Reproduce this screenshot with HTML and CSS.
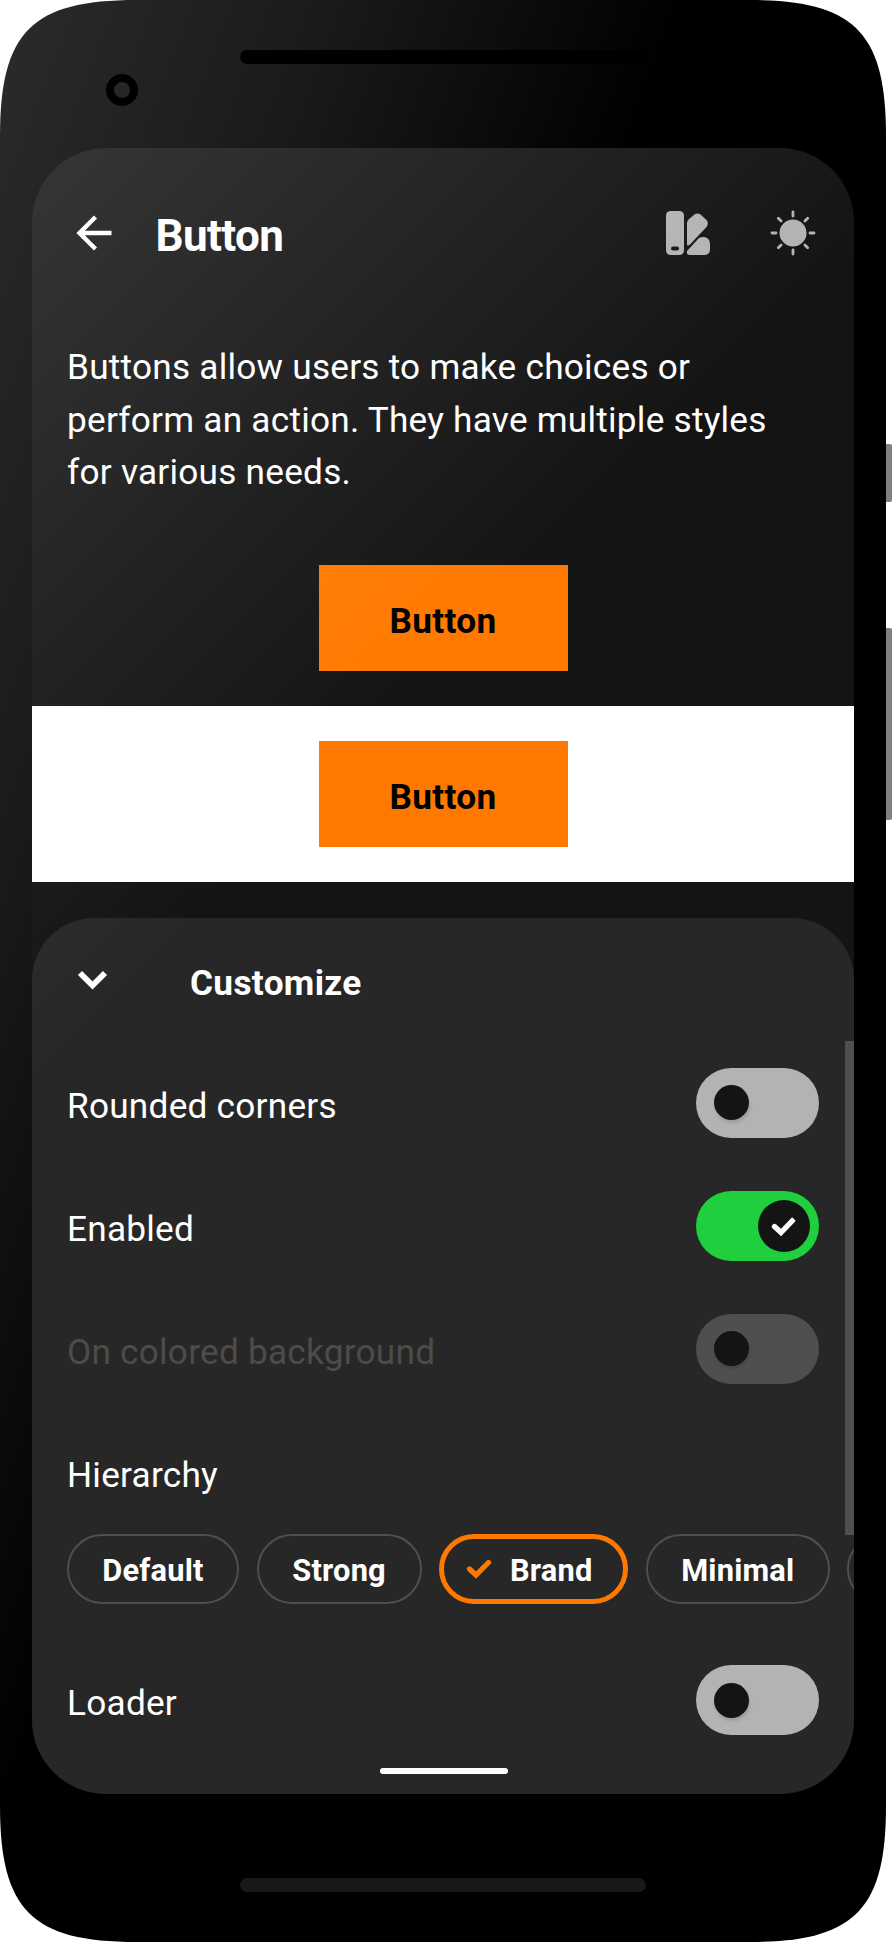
FILE: index.html
```html
<!DOCTYPE html>
<html lang="en">
<head>
<meta charset="utf-8">
<title>Button</title>
<link rel="stylesheet" href="styles.css">
</head>
<body>
<div class="device">
  <span class="side-key power"></span>
  <span class="side-key volume"></span>
  <svg class="body" width="886" height="1942" viewBox="0 0 886 1942">
    <defs>
      <linearGradient id="shine" gradientUnits="userSpaceOnUse" x1="0" y1="100" x2="570" y2="315">
        <stop offset="0" stop-color="#292929"/><stop offset=".45" stop-color="#1a1a1a"/><stop offset="1" stop-color="#000"/>
      </linearGradient>
    </defs>
    <path fill="url(#shine)" d="M136 0H750C854 0 886 32 886 136V1806C886 1910 854 1942 750 1942H136C32 1942 0 1910 0 1806V136C0 32 32 0 136 0Z"/>
    <rect x="240" y="50" width="406" height="14" rx="7" fill="#000"/>
    <circle cx="122" cy="90" r="12" fill="#262626" stroke="#000" stroke-width="8"/>
    <rect x="240" y="1878" width="406" height="14" rx="7" fill="#181818"/>
  </svg>
  <main class="screen">
    <header class="appbar">
      <svg class="back" width="36" height="36" viewBox="0 0 36 36"><path d="M35.500 18H3.500M19.500 2L3.500 18l16 16" fill="none" stroke="#fff" stroke-width="4.400"/></svg>
      <h1>Button</h1>
      <svg class="palette" width="46" height="46" viewBox="0 0 46 46" fill="#b3b3b3">
        <path fill-rule="evenodd" d="M6 1H14Q19 1 19 6V40Q19 45 14 45H6Q1 45 1 40V6Q1 1 6 1ZM8 36.500a2 2 0 0 0 0 4h4a2 2 0 0 0 0-4Z"/>
        <path d="M22 13Q22 11 24 9L29.500 4.500Q32.500 2.500 35.500 4.500L41 9.500Q44.500 13 41.500 17L25 34.500Q22 37 22 34Z"/>
        <path d="M34 28Q36 27 39 27Q45 28 45 34V39Q45 45 39 45H25Q21 45 22 41Z"/>
      </svg>
      <svg class="sun" width="46" height="46" viewBox="0 0 46 46"><circle cx="23" cy="23" r="13.500" fill="#b3b3b3"/><path d="M23 2v4M23 40v4M2 23h4M40 23h4M8.300 8.300l2.800 2.800M34.900 34.900l2.800 2.800M8.300 37.700l2.800-2.800M34.900 11.100l2.800-2.800" stroke="#b3b3b3" stroke-width="2.800" stroke-linecap="round"/></svg>
    </header>
    <p class="intro">Buttons allow users to make choices or<br>perform an action. They have multiple styles<br>for various needs.</p>
    <div class="demo dark"><button class="brand">Button</button></div>
    <div class="demo light"><button class="brand">Button</button></div>
    <section class="sheet">
      <div class="sheet-head">
        <svg width="32" height="20" viewBox="0 0 32 20"><path d="M4 3L16.500 15.500 29 3" fill="none" stroke="#fff" stroke-width="5.800"/></svg>
        <h2>Customize</h2>
      </div>
      <div class="row"><span>Rounded corners</span><i class="switch"></i></div>
      <div class="row"><span>Enabled</span><i class="switch on"><svg width="26" height="22" viewBox="0 0 26 22"><path d="M3.500 11.500L10 17.500 23 4" fill="none" stroke="#fff" stroke-width="5.300" stroke-linecap="round"/></svg></i></div>
      <div class="row off"><span>On colored background</span><i class="switch"></i></div>
      <h3>Hierarchy</h3>
      <div class="chips">
        <span class="chip c1">Default</span>
        <span class="chip c2">Strong</span>
        <span class="chip c3"><svg width="26" height="22" viewBox="0 0 26 22"><path d="M3.500 11L10 17 22.500 4.500" fill="none" stroke="#ff7900" stroke-width="5.300" stroke-linecap="round"/></svg>Brand</span>
        <span class="chip c4">Minimal</span>
        <span class="chip c5"></span>
      </div>
      <div class="row loader"><span>Loader</span><i class="switch"></i></div>
      <span class="scrollbar"></span>
      <span class="homebar"></span>
    </section>
    <div class="glare"></div>
  </main>
</div>
</body>
</html>
```
FILE: styles.css
```css
* { box-sizing: border-box; }
body { margin: 0; background: #fff; font-family: Roboto, "Liberation Sans", sans-serif; }
.device { position: relative; width: 892px; height: 1942px; padding: 148px 38px 148px 32px; overflow: hidden; }
.body { position: absolute; left: 0; top: 0; }
.side-key { position: absolute; left: 884px; width: 8px; background: #808080; border-radius: 0 2px 2px 0; }
.power { top: 444px; height: 58px; }
.volume { top: 628px; height: 192px; }
.screen { position: relative; width: 822px; height: 1646px; border-radius: 74px; overflow: hidden; background: #141414; color: #fff; }
.glare { position: absolute; inset: 0; pointer-events: none; background: linear-gradient(135deg, rgba(255,255,255,.145) 0, rgba(255,255,255,0) 660px); }
.appbar { height: 176px; display: flex; align-items: center; padding: 0 38.500px 6px 44px; }
.appbar h1 { margin: 5px auto 0 43.500px; font-size: 44px; line-height: 52px; font-weight: 700; letter-spacing: -.6px; }
.sun { margin-left: 59px; }
.intro { margin: 0; padding: 17px 35px 0; height: 241px; font-size: 35.200px; line-height: 52.500px; letter-spacing: .240px; white-space: nowrap; }
.demo { display: flex; justify-content: center; }
.demo.dark { height: 141px; }
.demo.light { height: 176px; padding-top: 35px; background: #fff; }
.brand { width: 249px; height: 106px; border: 0; padding: 5px 0 0; background: #ff7900; color: #000; font: 700 35.200px Roboto, sans-serif; letter-spacing: .3px; }
.sheet { position: relative; height: 876px; margin-top: 36px; border-radius: 62px 62px 0 0; background: #272727; overflow: hidden; }
.sheet-head { height: 123px; display: flex; align-items: center; gap: 82px; padding: 0 44px; }
.sheet-head h2 { margin: 7px 0 0; font-size: 35.200px; font-weight: 700; letter-spacing: .35px; }
.row { height: 123.200px; display: flex; align-items: center; justify-content: space-between; padding: 0 35px; font-size: 35.200px; letter-spacing: .240px; }
.row > span { padding-top: 7px; }
.row.off { color: #4c4c4b; }
.switch { display: flex; align-items: center; justify-content: flex-start; width: 123px; height: 70px; border-radius: 35px; padding: 0 18px; background: #b3b3b3; }
.switch::before { content: ""; width: 35px; height: 35px; border-radius: 50%; background: #141414; box-shadow: 1px 3px 3px rgba(0,0,0,.12); }
.off .switch { background: #4f4f4e; }
.switch.on { background: #1fcf3d; justify-content: flex-end; padding: 0 9px; }
.switch.on::before { display: none; }
.switch.on svg { box-sizing: content-box; padding: 15px 13px 15px; width: 26px; height: 22px; background: #141414; border-radius: 50%; }
.sheet h3 { margin: 0; padding: 40px 35px 0; height: 123px; font-size: 35.200px; line-height: 48px; font-weight: 400; letter-spacing: .240px; }
.chips { display: flex; gap: 17.600px; padding-left: 35px; }
.chip { flex: none; display: flex; align-items: center; justify-content: center; height: 70px; border: 2.200px solid #4f4f4f; border-radius: 35px; font-size: 30.800px; font-weight: 700; letter-spacing: .2px; padding-top: 3px; }
.c1 { width: 172px; }
.c2 { width: 165px; }
.c3 { width: 189px; border: 5px solid #ff7900; gap: 18px; padding-right: 9px; }
.c3 svg { margin-top: -3px; }
.c4 { width: 184px; }
.c5 { width: 170px; }
.loader { margin-top: 35px; }
.loader > span { padding-top: 5px; }
.scrollbar { position: absolute; right: 0; top: 123px; width: 9px; height: 494px; background: #4f4f4e; }
.homebar { position: absolute; left: 348px; top: 850px; width: 128px; height: 6px; border-radius: 3px; background: #fff; }
```
